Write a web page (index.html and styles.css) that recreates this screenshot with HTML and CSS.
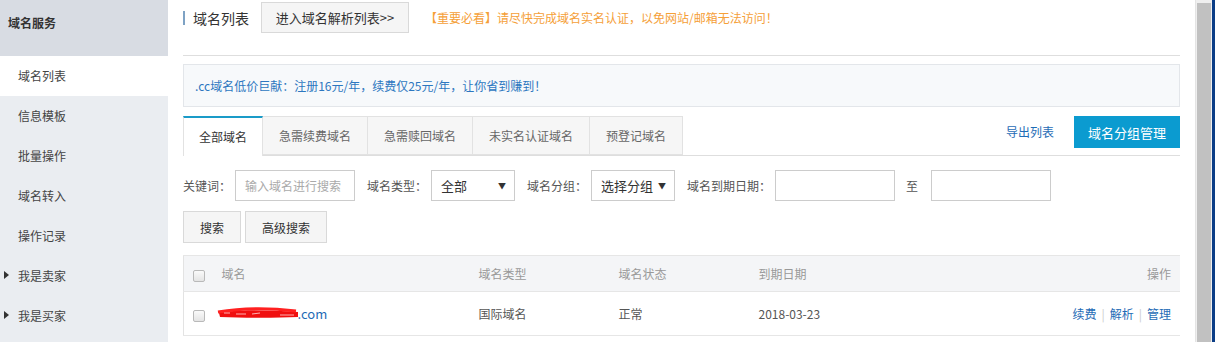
FILE: index.html
```html
<!DOCTYPE html>
<html lang="zh-CN">
<head>
  <meta charset="UTF-8" />
  <title>域名列表</title>
  <link rel="stylesheet" href="styles.css">
</head>
<body>
  <div class="page">
    <aside class="sidebar">
      <div class="side-head">域名服务</div>
      <div class="side-item active">域名列表</div>
      <div class="side-item">信息模板</div>
      <div class="side-item">批量操作</div>
      <div class="side-item">域名转入</div>
      <div class="side-item">操作记录</div>
      <div class="side-item fold">我是卖家</div>
      <div class="side-item fold">我是买家</div>
    </aside>

    <main class="main">
      <div class="title-bar">
        <span class="title">域名列表</span>
        <button class="btn-plain">进入域名解析列表&gt;&gt;</button>
        <span class="warn">【重要必看】请尽快完成域名实名认证，以免网站/邮箱无法访问！</span>
      </div>

      <div class="notice">.cc域名低价巨献：注册16元/年，续费仅25元/年，让你省到赚到！</div>

      <div class="tabs">
        <div class="tab active">全部域名</div>
        <div class="tab">急需续费域名</div>
        <div class="tab">急需赎回域名</div>
        <div class="tab">未实名认证域名</div>
        <div class="tab">预登记域名</div>
        <div class="tab-tools">
          <a class="link">导出列表</a>
          <button class="btn-blue">域名分组管理</button>
        </div>
      </div>

      <div class="filters">
        <label>关键词：</label>
        <div class="input kw">输入域名进行搜索</div>
        <label>域名类型：</label>
        <div class="input select">全部<span class="arrow">▼</span></div>
        <label>域名分组：</label>
        <div class="input select">选择分组<span class="arrow">▼</span></div>
        <label>域名到期日期：</label>
        <div class="input date"></div>
        <label class="to">至</label>
        <div class="input date"></div>
      </div>

      <div class="actions">
        <button class="btn-plain small">搜索</button>
        <button class="btn-plain small">高级搜索</button>
      </div>

      <table class="list">
        <thead>
          <tr>
            <th class="c-check"><span class="checkbox"></span></th>
            <th class="c-name">域名</th>
            <th class="c-type">域名类型</th>
            <th class="c-state">域名状态</th>
            <th class="c-date">到期日期</th>
            <th class="c-op">操作</th>
          </tr>
        </thead>
        <tbody>
          <tr>
            <td class="c-check"><span class="checkbox"></span></td>
            <td class="c-name">
              <span class="domain">
                <svg class="scribble" width="84" height="14" viewBox="0 0 84 14">
                  <path d="M3 7 C20 3, 50 4, 82 6 L82 11 C60 12, 30 12, 4 11 Z" fill="#f01010"/>
                  <path d="M2 6 C25 2, 55 2, 80 5" stroke="#ff2020" stroke-width="3" fill="none"/>
                  <path d="M8 7 L14 7 M20 8 L30 8 M36 8 L44 7 M64 9 L78 9" stroke="#ffb0b0" stroke-width="1" fill="none"/>
                </svg>.com</span>
            </td>
            <td class="c-type">国际域名</td>
            <td class="c-state">正常</td>
            <td class="c-date">2018-03-23</td>
            <td class="c-op"><a class="link">续费</a><span class="sep">|</span><a class="link">解析</a><span class="sep">|</span><a class="link">管理</a></td>
          </tr>
        </tbody>
      </table>
    </main>

    <div class="scrollbar"><div class="thumb"></div></div>
  </div>
</body>
</html>
```

FILE: styles.css
```css
* {
  box-sizing: border-box;
}

body {
  margin: 0;
  font-family: "Noto Sans CJK SC", "Liberation Sans", sans-serif;
  font-size: 12px;
  color: #555;
  background: #fff;
  overflow: hidden;
}

.page {
  display: flex;
  height: 342px;
}

/* sidebar */
.sidebar {
  width: 168px;
  flex-shrink: 0;
  background: #eaedf1;
}

.side-head {
  height: 56px;
  padding: 14px 0 0 8px;
  background: #d8dce3;
  font-size: 12px;
  font-weight: bold;
  color: #333;
}

.side-item {
  height: 40px;
  line-height: 40px;
  padding-left: 18px;
  color: #444;
  position: relative;
}

.side-item.active {
  background: #fff;
}

.side-item.fold::before {
  content: "";
  position: absolute;
  left: 4px;
  top: 15px;
  border-left: 5px solid #333;
  border-top: 4px solid transparent;
  border-bottom: 4px solid transparent;
}

/* main */
.main {
  width: 997px;
  margin-left: 15px;
  flex-shrink: 0;
}

.title-bar {
  display: flex;
  align-items: center;
  height: 56px;
  padding-bottom: 22px;
  padding-top: 2px;
  border-bottom: 1px solid #dedede;
}

.title {
  border-left: 2px solid #7ea2c4;
  padding-left: 8px;
  font-size: 14px;
  line-height: 14px;
  color: #333;
  margin-right: 12px;
}

.btn-plain {
  font-family: inherit;
  font-size: 12px;
  color: #333;
  background: #f5f5f5;
  border: 1px solid #d9d9d9;
  height: 31px;
  padding: 0;
  white-space: nowrap;
}

.title-bar .btn-plain {
  width: 148px;
  font-size: 13px;
}

.warn {
  margin-left: 16px;
  color: #f5a038;
  font-size: 12px;
}

.notice {
  margin-top: 8px;
  height: 43px;
  line-height: 41px;
  padding-left: 11px;
  background: #f7f9fb;
  border: 1px solid #e3e6ea;
  color: #2d77c0;
}

/* tabs */
.tabs {
  display: flex;
  margin-top: 9px;
  border-bottom: 1px solid #dedede;
  height: 40px;
}

.tab {
  height: 39px;
  line-height: 37px;
  text-align: center;
  white-space: nowrap;
  background: #f6f6f6;
  border: 1px solid #e2e2e2;
  border-left: none;
  color: #666;
}

.tab:nth-child(2) { width: 105px; }
.tab:nth-child(3) { width: 105px; }
.tab:nth-child(4) { width: 117px; }
.tab:nth-child(5) { width: 93px; }

.tab.active {
  width: 80px;
  background: #fff;
  border-left: 1px solid #e2e2e2;
  border-top: 2px solid #1a9bc8;
  border-bottom: none;
  color: #333;
  height: 40px;
}

.tab-tools {
  margin-left: auto;
  display: flex;
  align-items: flex-start;
}

.link {
  color: #1f6cb6;
  cursor: pointer;
}

.tab-tools .link {
  margin-top: 7px;
  margin-right: 20px;
}

.btn-blue {
  font-family: inherit;
  font-size: 13px;
  color: #fff;
  background: #0b9bd0;
  border: none;
  width: 106px;
  height: 32px;
}

/* filters */
.filters {
  display: flex;
  align-items: center;
  margin-top: 14px;
  height: 31px;
}

.filters label {
  color: #555;
  margin-right: 4px;
  white-space: nowrap;
}

.input {
  height: 31px;
  border: 1px solid #ccc;
  background: #fff;
  margin-right: 12px;
  display: flex;
  align-items: center;
  padding: 0 9px;
  color: #333;
  position: relative;
  white-space: nowrap;
}

.input.kw {
  width: 120px;
  color: #aaa;
}

.input.select {
  width: 84px;
  font-size: 13px;
}

.arrow {
  position: absolute;
  right: 8px;
  font-size: 8px;
  color: #333;
}

.input.date {
  width: 120px;
}

.filters .to {
  margin-left: -1px;
  margin-right: 13px;
}

.actions {
  display: flex;
  gap: 4px;
  margin-top: 10px;
}

.btn-plain.small {
  height: 32px;
}

.actions .btn-plain:first-child { width: 58px; }
.actions .btn-plain:last-child { width: 82px; }

/* table */
.list {
  width: 997px;
  margin-top: 12px;
  border-collapse: collapse;
  border-left: 1px solid #e3e3e3;
}

.list th {
  height: 36px;
  background: #f4f5f7;
  font-weight: normal;
  color: #999;
  text-align: left;
  border-top: 1px solid #e6e6e6;
  border-bottom: 1px solid #e6e6e6;
}

.list td {
  height: 44px;
  border-bottom: 1px solid #e6e6e6;
  color: #555;
}

.c-check { width: 37px; padding-left: 9px; }
.c-name { width: 257px; }
.c-type { width: 140px; }
.c-state { width: 140px; }
.c-date { width: 200px; }
.list .c-op { text-align: right; padding-right: 9px; }

.checkbox {
  display: inline-block;
  width: 12px;
  height: 12px;
  border: 1px solid #b9b9b9;
  border-radius: 2px;
  background: linear-gradient(#fafafa, #e4e4e4);
  vertical-align: middle;
}

.domain {
  color: #1f6cb6;
  font-size: 13px;
  display: inline-flex;
  align-items: center;
  margin-left: -6px;
}

.scribble {
  margin-right: -2px;
}

.sep {
  color: #ccc;
  margin: 0 5px;
}

/* scrollbar */
.scrollbar {
  margin-left: auto;
  width: 20px;
  height: 342px;
  background: #efefef;
  border-left: 1px solid #e4e4e4;
  border-right: 3px solid #0b3d86;
  padding: 3px 1px 0 1px;
}

.thumb {
  height: 100%;
  background: #c1c1c1;
}
```
